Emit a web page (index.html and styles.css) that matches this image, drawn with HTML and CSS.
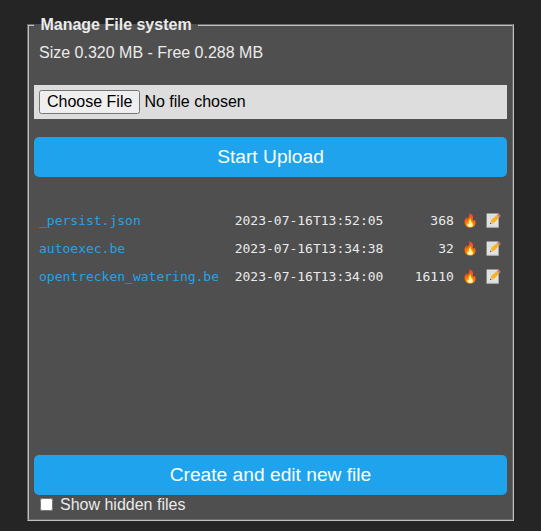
FILE: index.html
```html
<!DOCTYPE html>
<html lang="en">
<head>
<meta charset="utf-8">
<title>Manage File system</title>
<link rel="stylesheet" href="styles.css">
</head>
<body>
<svg width="0" height="0" class="defs"><symbol id="edit" viewBox="0 0 15 16"><path d="M.6 1.5h12v14H.6z" fill="#e1e3e3"/><path d="M.6 14.7h12v.8H.6z" fill="#b8bcbc"/><path d="M2.5 4h6M2.5 6.5h4" stroke="#d0d3d3" stroke-width=".7"/><path d="M3.8 12.2l1-3.6 2.7 2.6z" fill="#dfc48f"/><path d="M3.8 12.2l.5-1.7 1.2 1.2z" fill="#555"/><path d="M4.8 8.6l5.7-5.4 2.6 2.6-5.6 5.4z" fill="#fbb31b"/><path d="M10.5 3.2l.7-.7 2.6 2.6-.7.7z" fill="#9aabb2"/><path d="M11.2 2.5l.7-.6q.7-.5 1.5.3l.8.8q.7.8.3 1.4l-.7.7z" fill="#e9656f"/></symbol></svg>
<div class="page">
<fieldset>
<legend><b>&nbsp;Manage File system&nbsp;</b></legend>
<div class="size">Size 0.320 MB - Free 0.288 MB</div>
<form>
<input class="upload" type="file">
<button type="button">Start Upload</button>
</form>
<div class="files">
<pre><a href="#">_persist.json</a>            2023-07-16T13:52:05      368 <span>🔥</span> <svg class="edit"><use href="#edit"/></svg></pre>
<pre><a href="#">autoexec.be</a>              2023-07-16T13:34:38       32 <span>🔥</span> <svg class="edit"><use href="#edit"/></svg></pre>
<pre><a href="#">opentrecken_watering.be</a>  2023-07-16T13:34:00    16110 <span>🔥</span> <svg class="edit"><use href="#edit"/></svg></pre>
</div>
<button type="button">Create and edit new file</button>
<label class="hidden-toggle"><input type="checkbox">Show hidden files</label>
</fieldset>
</div>
</body>
</html>
```

FILE: styles.css
```css
* { box-sizing: border-box; }
body { margin: 0; background: #252525; color: #eaeaea; font: 16px "Liberation Sans", Arial, sans-serif; }
.defs { position: absolute; }
.page { padding: 16px 27px 0; }
fieldset { margin: 0; padding: 5px; height: 505px; min-width: 0; background: #4f4f4f; border: 2px groove #c0c0c0; }
legend { padding: 0 2px; line-height: 18px; }
.size { padding: 5px; line-height: 18px; height: 46px; }
.upload { display: block; width: 100%; height: 34px; padding: 5px; margin-bottom: 18px; background: #ddd; color: #000; font: 16px "Liberation Sans", Arial, sans-serif; }
.upload::file-selector-button { font: inherit; }
button { display: block; width: 100%; height: 40px; padding: 0; border: 0; border-radius: 5px; background: #1fa3ec; color: #faffff; font: 19.2px/38px "Liberation Sans", Arial, sans-serif; }
.files { height: 278px; padding: 30px 5px 0; }
pre { margin: 0; height: 28px; font: 13px/28px "DejaVu Sans Mono", monospace; }
.edit { width: 15px; height: 16px; margin-left: 1px; vertical-align: -3px; }
a { color: #1fa3ec; text-decoration: none; }
.hidden-toggle { display: flex; align-items: center; height: 19px; padding-left: 6px; }
.hidden-toggle input { margin: 0 7px 0 0; }
```
